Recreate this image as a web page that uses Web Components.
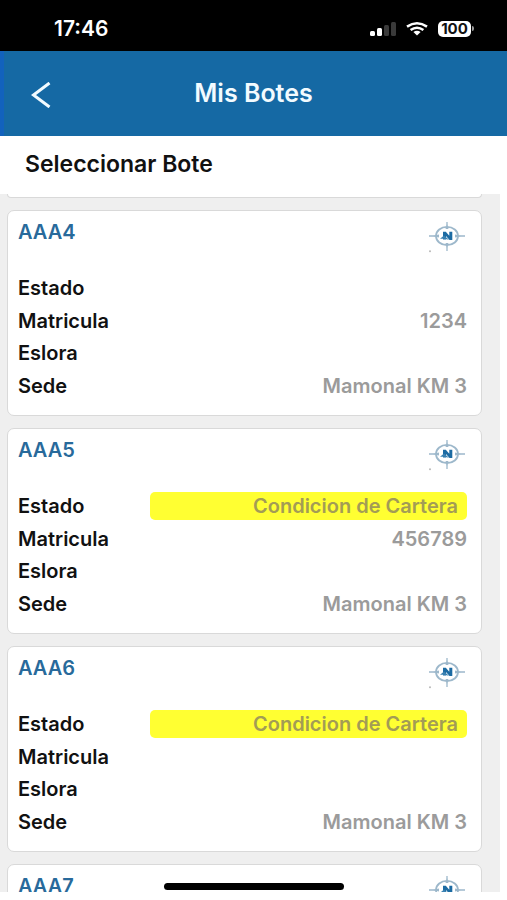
<!DOCTYPE html>
<html lang="es">
<head>
<meta charset="utf-8">
<meta name="viewport" content="width=device-width, initial-scale=1">
<title>Mis Botes</title>
<style>
  body { margin: 0; background: #fff; font-family: Inter, "Liberation Sans", sans-serif; font-weight: 600; color: #111; }
</style>
</head>
<body>
<botes-app></botes-app>
<script>
const define = (name, html) => {
  const template = document.createElement('template');
  template.innerHTML = html;
  customElements.define(name, class extends HTMLElement {
    constructor() {
      super();
      this.attachShadow({ mode: 'open' }).append(template.content.cloneNode(true));
    }
  });
};

define('status-bar', `
  <style>
    :host { display: flex; align-items: center; justify-content: space-between; box-sizing: border-box; height: 51px; padding: 6px 33px 0 54px; background: #000; color: #fff; font-size: 21px; line-height: 24px; }
    div { display: flex; align-items: center; gap: 10px; }
    svg { display: block; }
    .battery { display: flex; align-items: center; gap: 1px; }
    .level { width: 33px; height: 16px; border-radius: 5px; background: #fff; color: #111; font-size: 15px; line-height: 16px; font-weight: 700; text-align: center; }
    .battery::after { content: ""; width: 2px; height: 5px; border-radius: 0 2px 2px 0; background: #999; }
  </style>
  <time>17:46</time>
  <div>
    <svg width="26" height="14" viewBox="0 0 26 14" role="img" aria-label="Señal">
      <rect x="0" y="9" width="5" height="5" rx="1.5" fill="#fff"/>
      <rect x="7" y="6" width="5" height="8" rx="1.5" fill="#fff"/>
      <rect x="14" y="3" width="5" height="11" rx="1.5" fill="#3a3a3a"/>
      <rect x="21" y="0" width="5" height="14" rx="1.5" fill="#3a3a3a"/>
    </svg>
    <svg width="22" height="14" viewBox="0 0 22 14" role="img" aria-label="Wi-Fi" fill="none" stroke="#fff" stroke-width="2.5">
      <path d="M1 4.6Q11-2 21 4.6"/>
      <path d="M4.6 8Q11 3.4 17.4 8"/>
      <path d="M7.4 10Q11 7.6 14.6 10L11 13.6Z" fill="#fff" stroke="none"/>
    </svg>
    <span class="battery"><span class="level">100</span></span>
  </div>
`);

define('nav-bar', `
  <style>
    :host { display: grid; grid-template-columns: 64px 1fr 64px; align-items: center; box-sizing: border-box; height: 85px; padding-right: 4px; border-left: 4px solid #1262bd; background: #1569a4; color: #f2fbff; }
    button { display: flex; justify-content: flex-end; padding: 8px 17px 6px 0; border: 0; background: none; color: inherit; }
    h1 { margin: 0; padding-bottom: 2px; font-size: 25px; line-height: 30px; font-weight: 600; text-align: center; }
  </style>
  <button type="button" aria-label="Volver">
    <svg width="20" height="26" viewBox="0 0 20 26" fill="none" stroke="currentColor" stroke-width="3"><path d="M18.500 1 2.500 13 18.500 25"/></svg>
  </button>
  <h1><slot></slot></h1>
`);

define('compass-button', `
  <style>
    :host { display: block; }
    button { display: block; padding: 0; border: 0; background: none; }
    svg { display: block; }
  </style>
  <button type="button" aria-label="Ubicación">
    <svg width="38" height="32" viewBox="1 0 38 32">
      <g fill="none" stroke="#9db8cb">
        <ellipse cx="19" cy="15" rx="11" ry="9.200" stroke-width="1.800"/>
        <path d="M1 15H11M27 15H37M19 1V8M19 22V30" stroke-width="1.300"/>
      </g>
      <path d="M5 15 11 13.600V16.400ZM33 15 27 13.600V16.400ZM19 3 20.500 8H17.500ZM19 27 20.500 22H17.500Z" fill="#9db8cb"/>
      <path d="M15 10.700H17.800L21.300 14.800V10.700H24.300V19H21.500L18 15V18.500H15Z" fill="#1c6ba3"/>
      <path d="M12 17.800 16 14.500 21 18.800 16 17.800Z" fill="#3b82b2"/>
      <circle cx="2" cy="30.300" r="1" fill="#b8b8b8"/>
    </svg>
  </button>
`);

define('bote-card', `
  <style>
    :host { display: block; flex: none; box-sizing: border-box; padding: 10px 14px 15px 10px; border: 1px solid #d9d9d9; border-radius: 7px; background: #fff; }
    header { display: flex; justify-content: space-between; align-items: flex-start; height: 53px; }
    ::slotted(h2) { margin: 0; font-size: 20px; line-height: 22px; font-weight: 600; color: #286a9b; }
    dl { display: flex; flex-direction: column; justify-content: space-between; min-height: 126px; margin: 0; }
  </style>
  <header><slot name="titulo"></slot><compass-button></compass-button></header>
  <dl><slot></slot></dl>
`);

define('bote-dato', `
  <style>
    :host { display: grid; grid-template-columns: 132px 1fr; align-items: center; height: 28px; font-size: 20px; line-height: 28px; }
    dd { margin: 0; color: #9b9b9b; text-align: right; }
    :host([alerta]) dd { padding-right: 9px; border-radius: 5px; background: #ffff32; color: #a39c55; }
  </style>
  <dt><slot name="nombre"></slot></dt>
  <dd><slot></slot></dd>
`);

define('botes-app', `
  <style>
    :host { display: flex; flex-direction: column; box-sizing: border-box; height: 100vh; padding-bottom: 8px; position: relative; background: #fff; }
    h2.section { flex: none; margin: 0; padding: 14px 25px 16px; font-size: 23px; line-height: 28px; font-weight: 600; }
    main { flex: 1; min-height: 0; display: flex; flex-direction: column; gap: 12px; overflow: hidden; margin-right: 7px; padding: 0 18px 0 7px; background: #efefef; }
    .previous { flex: none; height: 3px; border: 1px solid #d9d9d9; border-top: 0; border-radius: 0 0 7px 7px; background: #fff; }
    .home { position: absolute; bottom: 10px; left: 50%; width: 180px; height: 7px; margin-left: -90px; border-radius: 4px; background: #000; }
  </style>
  <status-bar></status-bar>
  <nav-bar>Mis Botes</nav-bar>
  <h2 class="section">Seleccionar Bote</h2>
  <main>
    <div class="previous"></div>
    <bote-card>
      <h2 slot="titulo">AAA4</h2>
      <bote-dato><span slot="nombre">Estado</span></bote-dato>
      <bote-dato><span slot="nombre">Matricula</span>1234</bote-dato>
      <bote-dato><span slot="nombre">Eslora</span></bote-dato>
      <bote-dato><span slot="nombre">Sede</span>Mamonal KM 3</bote-dato>
    </bote-card>
    <bote-card>
      <h2 slot="titulo">AAA5</h2>
      <bote-dato alerta><span slot="nombre">Estado</span>Condicion de Cartera</bote-dato>
      <bote-dato><span slot="nombre">Matricula</span>456789</bote-dato>
      <bote-dato><span slot="nombre">Eslora</span></bote-dato>
      <bote-dato><span slot="nombre">Sede</span>Mamonal KM 3</bote-dato>
    </bote-card>
    <bote-card>
      <h2 slot="titulo">AAA6</h2>
      <bote-dato alerta><span slot="nombre">Estado</span>Condicion de Cartera</bote-dato>
      <bote-dato><span slot="nombre">Matricula</span></bote-dato>
      <bote-dato><span slot="nombre">Eslora</span></bote-dato>
      <bote-dato><span slot="nombre">Sede</span>Mamonal KM 3</bote-dato>
    </bote-card>
    <bote-card><h2 slot="titulo">AAA7</h2></bote-card>
  </main>
  <div class="home"></div>
`);
</script>
</body>
</html>
